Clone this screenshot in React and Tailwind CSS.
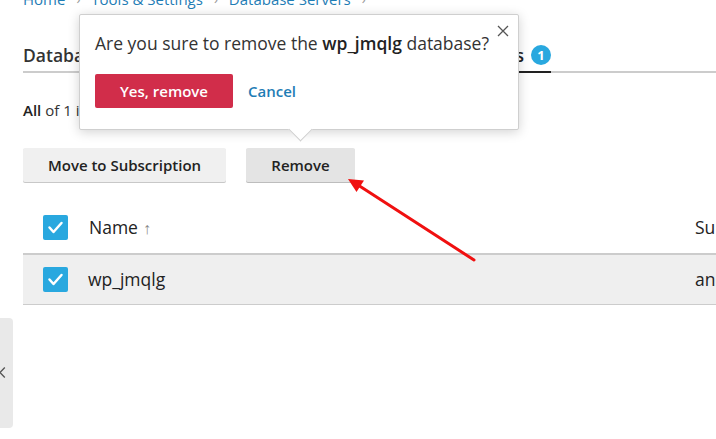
import React from 'react';

const Check = () => (
    <div className="w-[25px] h-[25px] rounded-[2px] bg-[#29a8df] flex items-center justify-center shrink-0">
        <svg width="25" height="25" viewBox="0 0 25 25">
            <polyline points="6.5,12.5 10.5,17 18.5,8" fill="none" stroke="white" strokeWidth="2.5" strokeLinecap="round" strokeLinejoin="round" />
        </svg>
    </div>
);

const Crumb = ({ children }) => (
    <>
        <span>{children}</span>
        <span className="mx-[11px] text-[#999] text-[13px]">›</span>
    </>
);

export default function App() {
    return (
        <div className="relative w-[716px] h-[439px] overflow-hidden bg-white font-['Open_Sans',sans-serif] text-[#333]">
            <div className="flex flex-col pl-[23px]">
                {/* breadcrumb */}
                <div className="-mt-[11px] h-[21px] leading-[21px] text-[15px] text-[#1f7db5] flex items-center">
                    <Crumb>Home</Crumb>
                    <Crumb>Tools &amp; Settings</Crumb>
                    <Crumb>Database Servers</Crumb>
                </div>

                {/* tabs */}
                <div className="mt-[32px] w-[760px] border-b-2 border-[#cccccc]">
                    <div className="w-[528px] flex items-end justify-between">
                        <div className="pb-[3px] text-[17.5px] leading-[26px] font-semibold text-[#333]">Databases</div>
                        <div className="w-[150px] -mb-[2px] border-b-2 border-[#222] pb-[3px] flex items-center justify-end gap-[7px]">
                            <span className="text-[17.5px] leading-[26px] font-semibold text-[#222]">Users</span>
                            <span className="w-[20px] h-[20px] rounded-full bg-[#29a8df] text-white text-[13px] font-bold leading-[20px] text-center">1</span>
                        </div>
                    </div>
                </div>

                {/* counter */}
                <div className="mt-[27px] text-[15px] leading-[21px] text-[#222]">
                    <span className="font-semibold">All</span> <span className="text-[#333]">of 1 items</span>
                </div>

                {/* toolbar */}
                <div className="mt-[27px] flex gap-[20px]">
                    <button className="w-[203px] h-[34px] bg-[#f0f0f0] rounded-[2px] shadow-[0_1px_0_#c8c8c8] text-[15px] font-semibold text-[#222]">Move to Subscription</button>
                    <button className="w-[109px] h-[34px] bg-[#e4e4e4] rounded-[2px] shadow-[0_1px_0_#bdbdbd] text-[15px] font-semibold text-[#222]">Remove</button>
                </div>

                {/* table */}
                <div className="mt-[20px] w-[760px] flex flex-col">
                    <div className="h-[51px] flex items-center">
                        <div className="pl-[20px] w-[66px]"><Check /></div>
                        <div className="flex items-center gap-[5px] text-[17.5px] text-[#222]">
                            Name <span className="text-[16px] text-[#888]">↑</span>
                        </div>
                        <div className="ml-auto w-[88px] text-[17.5px] text-[#222]">Subscription</div>
                    </div>
                    <div className="h-[52px] border-t-2 border-b border-[#cccccc] bg-[#efefef] flex items-center">
                        <div className="pl-[20px] w-[65px]"><Check /></div>
                        <div className="text-[17.5px] text-[#222]">wp_jmqlg</div>
                        <div className="ml-auto w-[88px] text-[17.5px] text-[#222]">andrew</div>
                    </div>
                </div>
            </div>

            {/* sidebar toggle */}
            <div className="absolute left-0 top-[318px] w-[13px] h-[110px] bg-[#e9e9e9] rounded-r-[4px]">
                <svg className="absolute left-0 top-[48px]" width="8" height="14" viewBox="0 0 8 14">
                    <polyline points="4.8,1.5 0,6.5 4.8,11.5" fill="none" stroke="#555" strokeWidth="1.3" />
                </svg>
            </div>

            {/* confirm popover */}
            <div className="absolute left-[79px] top-[14px] w-[440px] h-[116px] bg-white border border-[#cfcfcf] rounded-[2px] shadow-[0_2px_12px_rgba(0,0,0,0.18)] pl-[15px] pt-[15px]">
                <div className="text-[17.5px] leading-[26px] text-[#333]">
                    Are you sure to remove the <span className="font-semibold text-[#222]">wp_jmqlg</span> database?
                </div>
                <div className="mt-[18px] flex items-center gap-[15px]">
                    <button className="w-[138px] h-[34px] bg-[#d12d4a] rounded-[2px] text-white text-[15px] font-semibold">Yes, remove</button>
                    <button className="text-[15px] font-semibold text-[#1f7db5]">Cancel</button>
                </div>
                <svg className="absolute right-[9px] top-[10px]" width="12" height="12" viewBox="0 0 12 12">
                    <path d="M1 1 L11 11 M11 1 L1 11" stroke="#555" strokeWidth="1.3" />
                </svg>
                <div className="absolute left-[212px] -bottom-[9px] w-[17px] h-[17px] rotate-45 bg-white border-r border-b border-[#cfcfcf]" />
            </div>

            {/* annotation arrow */}
            <svg className="absolute left-0 top-0 pointer-events-none" width="716" height="439">
                <line x1="474" y1="260" x2="358" y2="185" stroke="#f01010" strokeWidth="3" strokeLinecap="round" />
                <polygon points="348,179 364,180.5 356.5,192" fill="#f01010" />
            </svg>
        </div>
    );
}
